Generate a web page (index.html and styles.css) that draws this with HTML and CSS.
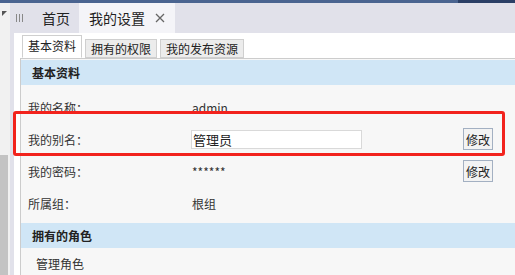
FILE: index.html
```html
<!DOCTYPE html>
<html lang="zh-CN">
<head>
    <meta charset="UTF-8">
    <meta name="viewport" content="width=device-width, initial-scale=1.0">
    <title>我的设置</title>
    <link rel="stylesheet" href="styles.css">
</head>
<body>
    <div class="topbar"></div>
    <div class="main">
        <div class="side">
            <svg class="side-arrow" width="5" height="5" viewBox="0 0 5 5"><polygon points="0,0 5,0 0,5" fill="#555"/></svg>
            <div class="side-thumb"></div>
        </div>
        <div class="workspace">
            <div class="tabbar">
                <svg class="tab-menu" width="8" height="8" viewBox="0 0 8 8">
                    <rect x="0" y="0" width="1" height="8" fill="#888"/>
                    <rect x="3" y="0" width="1" height="8" fill="#888"/>
                    <rect x="6" y="0" width="1" height="8" fill="#888"/>
                </svg>
                <div class="tab">首页</div>
                <div class="tab active">我的设置<svg class="tab-close" width="10" height="10" viewBox="0 0 10 10"><path d="M1 1 L9 9 M9 1 L1 9" stroke="#666" stroke-width="1.3" fill="none"/></svg></div>
            </div>
            <div class="page">
                <div class="subtabs">
                    <div class="subtab current">基本资料</div>
                    <div class="subtab">拥有的权限</div>
                    <div class="subtab">我的发布资源</div>
                </div>
                <div class="panel">
                    <div class="panel-title">基本资料</div>
                    <div class="rows">
                        <div class="row">
                            <span class="label">我的名称：</span>
                            <span class="value">admin</span>
                        </div>
                        <div class="row">
                            <span class="label">我的别名：</span>
                            <span class="value"><input type="text" class="field" value="管理员"></span>
                            <button class="btn">修改</button>
                        </div>
                        <div class="row">
                            <span class="label">我的密码：</span>
                            <span class="value">******</span>
                            <button class="btn">修改</button>
                        </div>
                        <div class="row">
                            <span class="label">所属组：</span>
                            <span class="value">根组</span>
                        </div>
                    </div>
                    <div class="panel-title second">拥有的角色</div>
                    <div class="role">管理角色</div>
                </div>
            </div>
        </div>
    </div>
    <div class="highlight"></div>
</body>
</html>
```

FILE: styles.css
```css
body {
    margin: 0;
    font-family: "Noto Sans CJK SC", "Liberation Sans", sans-serif;
    font-size: 12px;
    color: #333;
    background-color: #fff;
    overflow: hidden;
}
.topbar {
    height: 3px;
    background: linear-gradient(to right, #4a6490 458px, #2b3f66 458px);
}
.main {
    display: flex;
    height: 272px;
    overflow: hidden;
}
.side {
    width: 10px;
    background-color: #f1f1f1;
    display: flex;
    flex-direction: column;
}
.side-arrow {
    margin: 8px 0 0 2px;
}
.side-thumb {
    width: 8px;
    margin-top: 139px;
    flex: 1;
    background-color: #c3c3c3;
}
.workspace {
    flex: 1;
    background-color: #e1e1ea;
    display: flex;
    flex-direction: column;
}
.tabbar {
    height: 30px;
    flex-shrink: 0;
    display: flex;
    align-items: center;
    font-size: 14px;
    color: #222;
}
.tab-menu {
    margin: 0 11px 0 6px;
}
.tab {
    height: 30px;
    line-height: 30px;
    padding: 0 9px 0 7px;
}
.tab.active {
    display: flex;
    align-items: center;
    background-color: #f4f4f8;
    padding: 0 10px 0 10px;
}
.tab-close {
    margin-left: 10px;
}
.page {
    flex: 1;
    display: flex;
    flex-direction: column;
    background-color: #fff;
    margin-left: 4px;
    padding: 4px 0 0 6px;
}
.subtabs {
    display: flex;
    align-items: flex-end;
    height: 21px;
    flex-shrink: 0;
    padding-left: 2px;
    position: relative;
    z-index: 1;
}
.subtab {
    height: 17px;
    line-height: 17px;
    padding: 0 5px;
    margin-right: 3px;
    border: 1px solid #cfcfcf;
    background-color: #ececec;
    color: #222;
}
.subtab.current {
    height: 21px;
    line-height: 20px;
    background-color: #fff;
    border-bottom-color: #fff;
}
.panel {
    flex: 1;
    border-top: 1px solid #cccccc;
    border-left: 1px solid #cccccc;
    padding-top: 1px;
    background-color: #f7f7f7;
}
.panel-title {
    height: 25px;
    line-height: 25px;
    padding-left: 11px;
    background-color: #d0e6f6;
    font-weight: bold;
    color: #222;
}
.panel-title.second {
    margin-top: 4px;
}
.rows {
    margin-top: 6px;
}
.row {
    height: 32px;
    display: flex;
    align-items: center;
    padding-left: 7px;
}
.label {
    width: 164px;
}
.value {
    flex: 1;
}
.field {
    width: 171px;
    height: 19px;
    box-sizing: border-box;
    margin-left: -1px;
    padding: 0 1px;
    border: 1px solid #d9d9d9;
    font-family: "Noto Sans CJK SC", sans-serif;
    font-size: 13px;
    color: #222;
}
.btn {
    width: 30px;
    height: 22px;
    margin-right: 22px;
    padding: 0;
    border: 1px solid #a3b0c2;
    background-color: #f3f3f3;
    font-family: "Noto Sans CJK SC", sans-serif;
    font-size: 12px;
    color: #222;
}
.role {
    height: 32px;
    line-height: 32px;
    padding-left: 15px;
}
.highlight {
    position: absolute;
    left: 13px;
    top: 111px;
    width: 486px;
    height: 39px;
    border: 3px solid #f2231d;
    border-radius: 3px;
}
```
